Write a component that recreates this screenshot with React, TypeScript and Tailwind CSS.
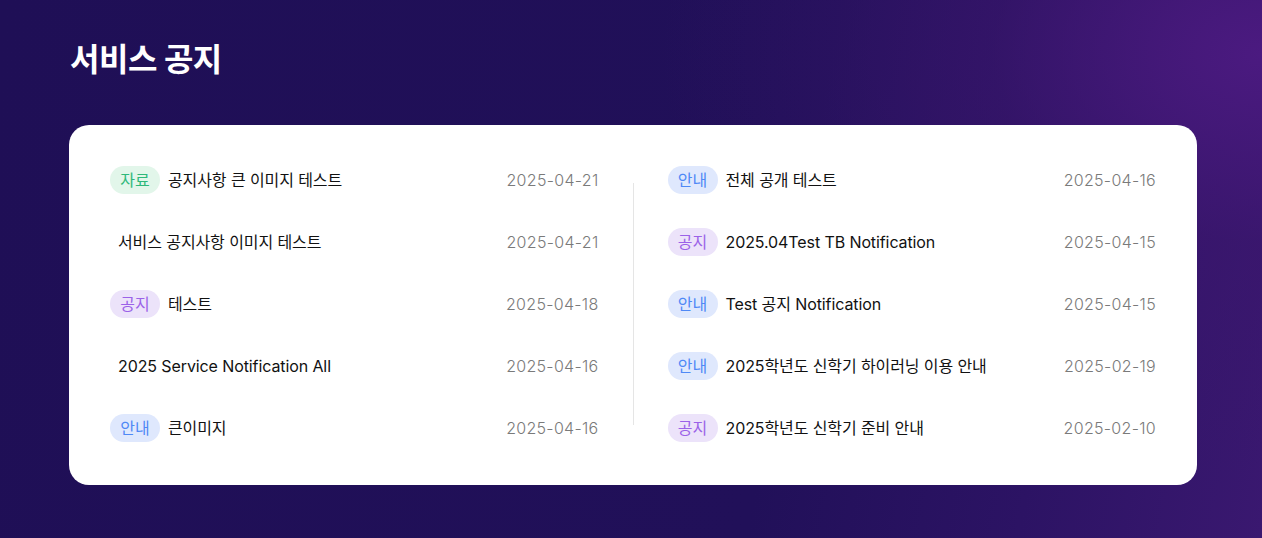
import React from "react";

type Tag = "자료" | "공지" | "안내" | null;
type Item = { tag: Tag; title: string; date: string };

const left: Item[] = [
  { tag: "자료", title: "공지사항 큰 이미지 테스트", date: "2025-04-21" },
  { tag: null, title: "서비스 공지사항 이미지 테스트", date: "2025-04-21" },
  { tag: "공지", title: "테스트", date: "2025-04-18" },
  { tag: null, title: "2025 Service Notification All", date: "2025-04-16" },
  { tag: "안내", title: "큰이미지", date: "2025-04-16" },
];

const right: Item[] = [
  { tag: "안내", title: "전체 공개 테스트", date: "2025-04-16" },
  { tag: "공지", title: "2025.04Test TB Notification", date: "2025-04-15" },
  { tag: "안내", title: "Test 공지 Notification", date: "2025-04-15" },
  { tag: "안내", title: "2025학년도 신학기 하이러닝 이용 안내", date: "2025-02-19" },
  { tag: "공지", title: "2025학년도 신학기 준비 안내", date: "2025-02-10" },
];

function Badge({ tag }: { tag: Tag }) {
  if (!tag) return null;
  const cls =
    tag === "자료"
      ? "bg-[#e2f6ea] text-[#2eb87a]"
      : tag === "공지"
      ? "bg-[#ece3fa] text-[#9b62e8]"
      : "bg-[#dfe8fd] text-[#4f89f6]";
  return (
    <span
      className={`${cls} shrink-0 w-[50px] h-[28px] rounded-full flex items-center justify-center text-[16px] leading-none`}
    >
      {tag}
    </span>
  );
}

function Column({ items }: { items: Item[] }) {
  return (
    <div className="flex-1 flex flex-col">
      {items.map((it, i) => (
        <div key={i} className="h-[62px] flex items-center">
          <Badge tag={it.tag} />
          <span className="ml-2 flex-1 text-[16px] text-[#111] tracking-[-0.1px]">{it.title}</span>
          <span className="text-[16px] text-[#7a7a7a] font-light tracking-[0.3px]">{it.date}</span>
        </div>
      ))}
    </div>
  );
}

export default function App() {
  return (
    <div
      className="w-[1262px] h-[538px] overflow-hidden bg-[radial-gradient(ellipse_600px_420px_at_100%_10%,#4b1a80_0%,rgba(60,22,110,0.55)_45%,rgba(33,16,89,0)_100%),linear-gradient(100deg,#1f0f56_0%,#211059_62%,#2c1364_82%,#3a1870_100%)] pl-[69px] pr-[65px] pt-[38px]"
      style={{ fontFamily: 'Inter, "Noto Sans CJK KR", sans-serif' }}
    >
      <h1 className="text-white text-[32px] font-bold leading-[44px] pl-px tracking-[-0.5px]">서비스 공지</h1>
      <div className="mt-[43px] bg-white rounded-[20px] h-[360px] pl-[41px] pr-[41px] pt-6 pb-[26px] flex">
        <Column items={left} />
        <div className="w-px bg-[#e5e5e5] mx-[34px] my-[34px]" />
        <Column items={right} />
      </div>
    </div>
  );
}
